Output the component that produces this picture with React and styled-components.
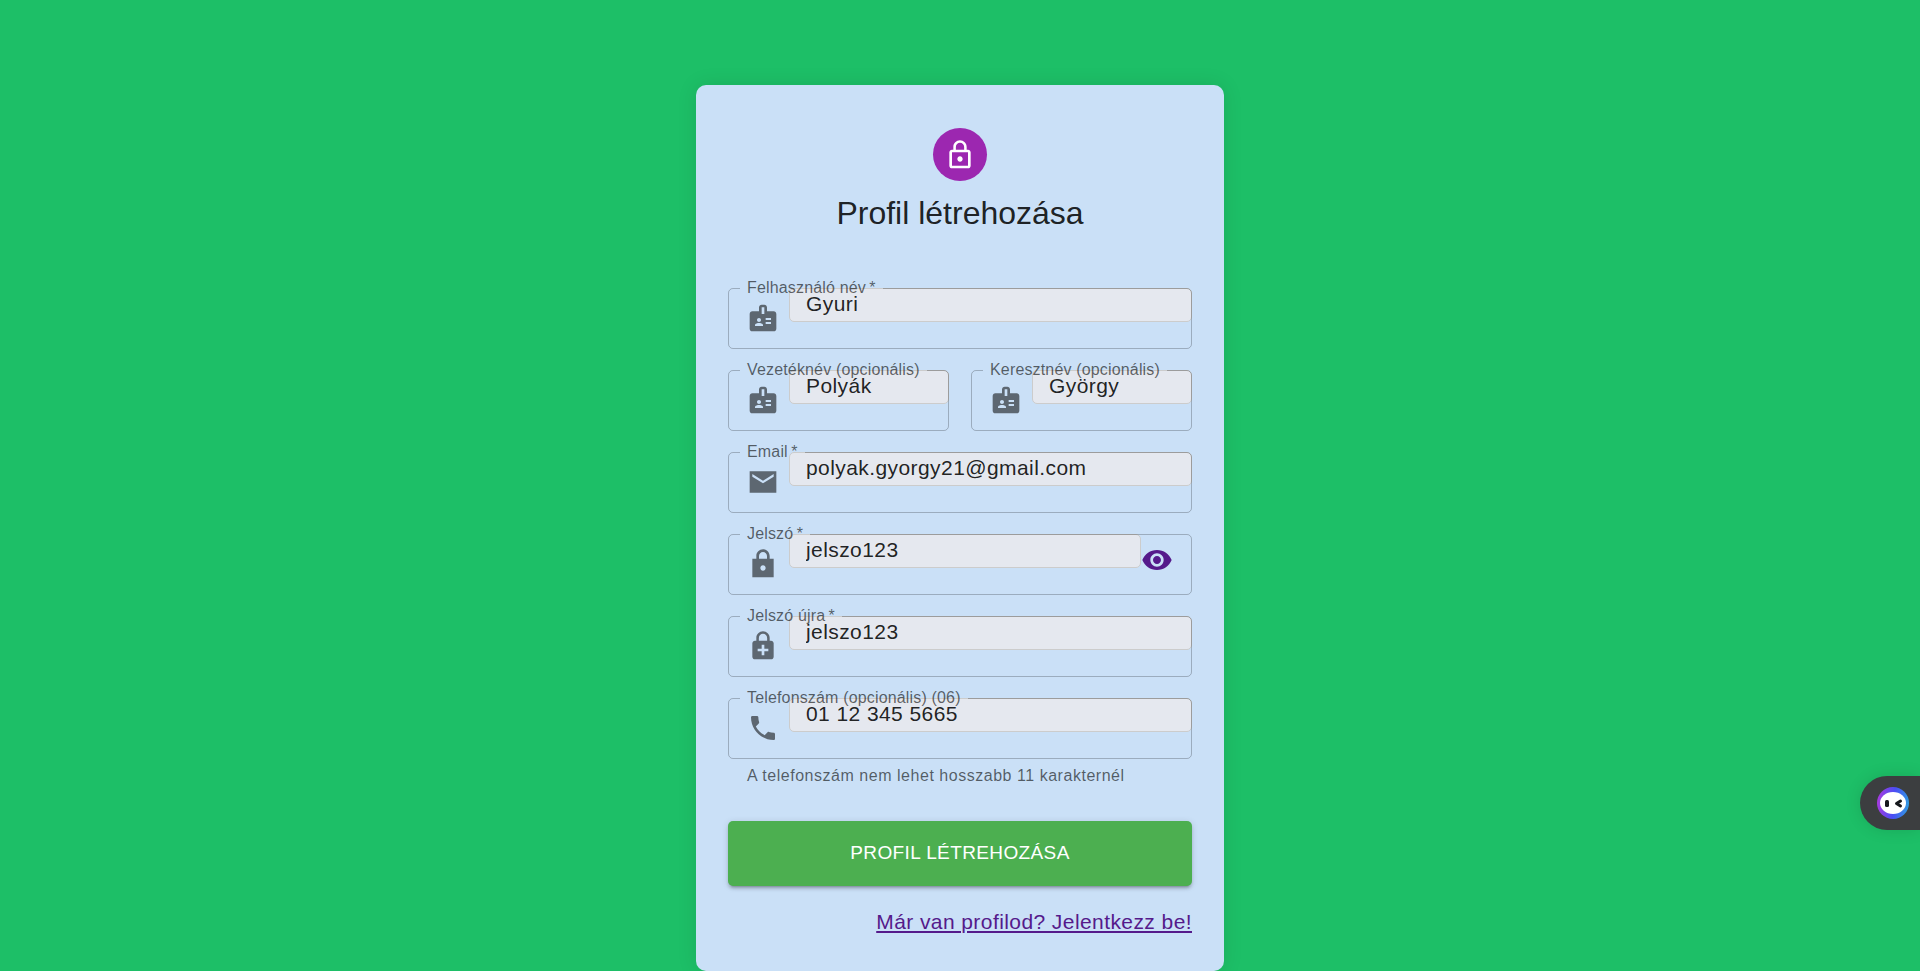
import React, { useState } from "react";
import styled, { createGlobalStyle } from "styled-components";
import { MdBadge, MdEnhancedEncryption, MdLockOutline, MdPhone, MdVisibility } from "react-icons/md";

const GlobalStyle = createGlobalStyle`
  *, *::before, *::after { box-sizing: border-box; }
  body {
    margin: 0;
    background: #1dbf67;
    color: rgba(0, 0, 0, 0.87);
    font-family: "Liberation Sans", Arial, sans-serif;
    font-size: 21px;
    letter-spacing: 0.02em;
  }
`;

const Page = styled.main`
  display: flex;
  justify-content: center;
  padding: 85px 16px 0;
`;

const Card = styled.section`
  display: flex;
  flex-direction: column;
  width: 100%;
  max-width: 528px;
  padding: 43px 32px 34px;
  border-radius: 10px;
  background: #cae0f7;
  box-shadow: 0 0 20px rgba(0, 0, 0, 0.1);
`;

const Avatar = styled.div`
  display: grid;
  place-items: center;
  align-self: center;
  width: 54px;
  height: 53px;
  border-radius: 50%;
  background: #9c27b0;
  color: #fff;
`;

const Title = styled.h1`
  margin: 11px 0 0;
  font-size: 32px;
  line-height: 43px;
  font-weight: 400;
  letter-spacing: 0;
  text-align: center;
`;

const Form = styled.form`
  display: flex;
  flex-direction: column;
  gap: 21px;
  margin-top: 53px;
`;

const Row = styled.div`
  display: grid;
  grid-template-columns: repeat(2, minmax(0, 1fr));
  gap: 22px;
`;

const FieldRoot = styled.div`
  position: relative;
  display: flex;
  align-items: flex-start;
  height: 61px;
  padding-left: 19px;
  padding-right: ${(p) => (p.$trailing ? "19px" : "0")};
`;

const FieldIcon = styled.span`
  display: flex;
  align-self: center;
  flex: none;
  margin-right: 10px;
  padding-bottom: 2px;
  color: rgba(0, 0, 0, 0.54);
`;

const Input = styled.input`
  flex: 1;
  min-width: 0;
  height: 34px;
  padding: 0 16px 2px;
  border: 1px solid #ccc;
  border-radius: 5px;
  outline: none;
  background: #e5e8ef;
  color: rgba(0, 0, 0, 0.87);
  font: inherit;
  letter-spacing: inherit;
`;

const Label = styled.label`
  position: absolute;
  z-index: 1;
  top: -10px;
  left: 19px;
  color: rgba(0, 0, 0, 0.6);
  font-size: 16px;
  line-height: 20px;
  letter-spacing: 0.01em;
  white-space: nowrap;
`;

const Outline = styled.fieldset`
  position: absolute;
  inset: -8px 0 0;
  min-width: 0;
  margin: 0;
  padding: 0 11px;
  border: 1px solid rgba(0, 0, 0, 0.23);
  border-radius: 5px;
  pointer-events: none;
`;

const Notch = styled.legend`
  height: 16px;
  padding: 0 7px;
  font-size: 16px;
  line-height: 16px;
  letter-spacing: 0.01em;
  visibility: hidden;
  white-space: nowrap;
`;

const ToggleButton = styled.button`
  display: flex;
  align-self: center;
  flex: none;
  padding: 0 0 10px;
  border: 0;
  background: none;
  color: #551a8b;
  cursor: pointer;
`;

const HelperText = styled.p`
  margin: -16px 19px 0;
  color: rgba(0, 0, 0, 0.6);
  font-size: 16px;
  line-height: 24px;
  letter-spacing: 0.033em;
`;

const SubmitButton = styled.button`
  height: 65px;
  margin-top: 12px;
  padding: 0 16px 2px;
  border: 0;
  border-radius: 5px;
  background: #4caf50;
  box-shadow: 0 4px 2px -3px rgba(0, 0, 0, 0.2), 0 3px 3px rgba(0, 0, 0, 0.14), 0 1px 7px rgba(0, 0, 0, 0.12);
  color: #fff;
  font: inherit;
  font-size: 19px;
  letter-spacing: 0.02em;
  text-transform: uppercase;
  cursor: pointer;
`;

const LoginLink = styled.a`
  align-self: flex-end;
  color: #551a8b;
  line-height: 30px;
`;

const ChatTab = styled.button`
  position: fixed;
  right: 0;
  bottom: 141px;
  display: flex;
  align-items: center;
  width: 60px;
  height: 54px;
  padding: 0 0 0 17px;
  border: 0;
  border-radius: 27px 0 0 27px;
  background: #3c3e40;
  box-shadow: 0 0 16px rgba(0, 0, 0, 0.12);
  cursor: pointer;
`;

const SharpIcon = ({ d }) => (
  <svg width="32" height="32" viewBox="0 0 24 24" fill="currentColor" aria-hidden="true">
    <path d={d} />
  </svg>
);

const MAIL = "M22 4H2v16h20V4zm-2 4l-8 5-8-5V6l8 5 8-5v2z";
const LOCK =
  "M20 8h-3V6.21c0-2.61-1.91-4.94-4.51-5.19C9.51.74 7 3.08 7 6v2H4v14h16V8zm-8 9c-1.1 0-2-.9-2-2s.9-2 2-2 2 .9 2 2-.9 2-2 2zM9 8V6c0-1.66 1.34-3 3-3s3 1.34 3 3v2H9z";

function Field({ id, label, required, icon, trailing, ...input }) {
  const text = required ? `${label}\u2009*` : label;

  return (
    <FieldRoot $trailing={Boolean(trailing)}>
      <Label htmlFor={id}>{text}</Label>
      <FieldIcon>{icon}</FieldIcon>
      <Input id={id} required={required} {...input} />
      {trailing}
      <Outline aria-hidden="true">
        <Notch>{text}</Notch>
      </Outline>
    </FieldRoot>
  );
}

export default function App() {
  const [visible, setVisible] = useState(true);
  const type = visible ? "text" : "password";

  return (
    <>
      <GlobalStyle />
      <Page>
        <Card>
          <Avatar>
            <MdLockOutline size={32} />
          </Avatar>
          <Title>Profil létrehozása</Title>
          <Form onSubmit={(e) => e.preventDefault()}>
            <Field id="username" label="Felhasználó név" required icon={<MdBadge size={32} />} defaultValue="Gyuri" />
            <Row>
              <Field id="lastName" label="Vezetéknév (opcionális)" icon={<MdBadge size={32} />} defaultValue="Polyák" />
              <Field id="firstName" label="Keresztnév (opcionális)" icon={<MdBadge size={32} />} defaultValue="György" />
            </Row>
            <Field id="email" label="Email" required type="email" icon={<SharpIcon d={MAIL} />} defaultValue="polyak.gyorgy21@gmail.com" />
            <Field
              id="password"
              label="Jelszó"
              required
              type={type}
              icon={<SharpIcon d={LOCK} />}
              defaultValue="jelszo123"
              trailing={
                <ToggleButton type="button" aria-label="Jelszó megjelenítése" onClick={() => setVisible(!visible)}>
                  <MdVisibility size={32} />
                </ToggleButton>
              }
            />
            <Field id="passwordAgain" label="Jelszó újra" required type={type} icon={<MdEnhancedEncryption size={32} />} defaultValue="jelszo123" />
            <Field id="phone" label="Telefonszám (opcionális) (06)" type="tel" icon={<MdPhone size={32} />} defaultValue="01 12 345 5665" />
            <HelperText>A telefonszám nem lehet hosszabb 11 karakternél</HelperText>
            <SubmitButton type="submit">Profil létrehozása</SubmitButton>
            <LoginLink href="#login">Már van profilod? Jelentkezz be!</LoginLink>
          </Form>
        </Card>
      </Page>
      <ChatTab type="button" aria-label="Chat">
        <svg width="32" height="32" viewBox="0 0 32 32" aria-hidden="true">
          <defs>
            <linearGradient id="ring" x1="0" y1="0.7" x2="1" y2="0.8">
              <stop offset="0" stopColor="#a43be0" />
              <stop offset="0.5" stopColor="#4a4df5" />
              <stop offset="1" stopColor="#2f9fe0" />
            </linearGradient>
          </defs>
          <circle cx="16" cy="16" r="16" fill="url(#ring)" />
          <ellipse cx="16" cy="16" rx="13" ry="11" fill="#fff" />
          <rect x="8" y="13" width="4" height="7" rx="1.5" fill="#16181c" />
          <path d="M23.5 14l-4 2.5 4 2.5" fill="none" stroke="#16181c" strokeWidth="3" strokeLinecap="round" strokeLinejoin="round" />
        </svg>
      </ChatTab>
    </>
  );
}
